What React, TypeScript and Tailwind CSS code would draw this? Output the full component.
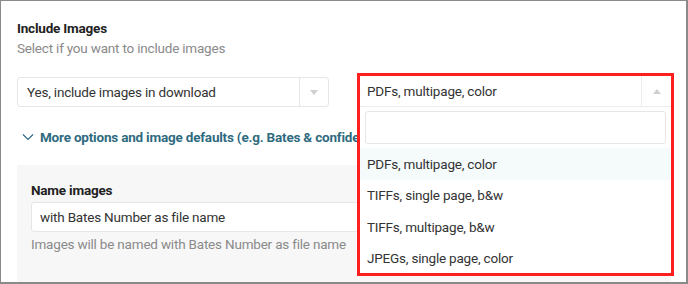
function Caret({ up }: { up?: boolean }) {
  return (
    <svg width="8" height="5" viewBox="0 0 8 5" className="text-[#cfcfcf]">
      {up ? <path d="M0 5 L4 0 L8 5 Z" fill="currentColor" /> : <path d="M0 0 L8 0 L4 5 Z" fill="currentColor" />}
    </svg>
  );
}

const options = [
  "PDFs, multipage, color",
  "TIFFs, single page, b&w",
  "TIFFs, multipage, b&w",
  "JPEGs, single page, color",
];

export default function App() {
  return (
    <div
      className="relative w-[688px] h-[284px] overflow-hidden bg-white border-l border-t border-r-2 border-b-2 border-[#8a8a8a] text-[13.5px] leading-5 tracking-[-0.2px]"
      style={{ fontFamily: "Roboto, 'Noto Sans', sans-serif" }}
    >
      <div className="pl-4 pt-[17px]">
        <div className="font-bold text-[#222]">Include Images</div>
        <div className="text-[#8a8a8a]">Select if you want to include images</div>

        <div className="mt-[19px] w-[312px] h-[30px] border border-[#e6e6e6] rounded-[3px] flex items-center">
          <div className="flex-1 pl-[9px] text-[#333]">Yes, include images in download</div>
          <div className="w-[29px] h-full border-l border-[#e6e6e6] flex items-center justify-center">
            <Caret />
          </div>
        </div>

        <div className="mt-[20px] flex items-center gap-[6px] text-[#2f6b80] font-bold">
          <svg width="12" height="8" viewBox="0 0 12 8" className="ml-[5px]">
            <path d="M1 1.5 L6 6.5 L11 1.5" fill="none" stroke="currentColor" strokeWidth="1.2" />
          </svg>
          <span>More options and image defaults (e.g. Bates &amp; confidentiality)</span>
        </div>

        <div className="mt-[18px] w-[654px] h-[130px] bg-[#f7f7f7] pl-[14px] pt-[15px]">
          <div className="font-bold text-[#222]">Name images</div>
          <div className="mt-[2px] w-[400px] h-[30px] bg-white border border-[#e6e6e6] rounded-[3px] flex items-center pl-[8px] text-[#333]">
            with Bates Number as file name
          </div>
          <div className="mt-[2px] text-[#8a8a8a]">Images will be named with Bates Number as file name</div>
        </div>
      </div>

      <div className="absolute left-[356px] top-[72px] w-[317px] h-[203px] border-[3px] border-[#ff1f1f] bg-white">
        <div className="h-[31px] flex items-center border-b border-[#ececec]">
          <div className="flex-1 pl-[7px] text-[#333]">PDFs, multipage, color</div>
          <div className="w-[30px] h-full border-l border-[#ececec] flex items-center justify-center">
            <Caret up />
          </div>
        </div>
        <div className="px-[5px] pt-[4px]">
          <div className="h-[33px] border border-[#e6e6e6] rounded-[3px]" />
        </div>
        <div className="mt-[4px]">
          {options.map((o, i) => (
            <div
              key={o}
              className={`h-[31.5px] flex items-center pl-[7px] text-[#333] ${i === 0 ? "bg-[#f5fafb]" : ""}`}
            >
              {o}
            </div>
          ))}
        </div>
      </div>
    </div>
  );
}
